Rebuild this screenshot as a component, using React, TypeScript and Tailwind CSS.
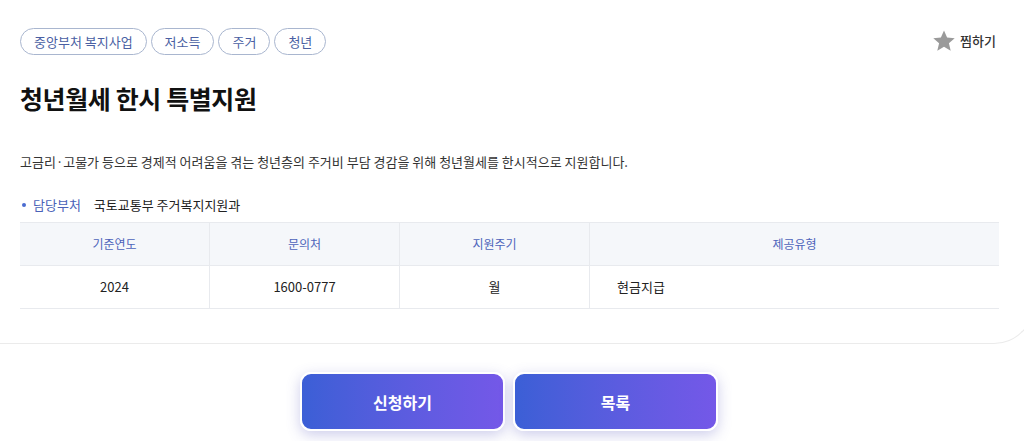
import React from "react";

export default function App() {
  const tags = ["중앙부처 복지사업", "저소득", "주거", "청년"];
  return (
    <div
      className="w-[1024px] h-[441px] overflow-hidden bg-white text-[#222]"
      style={{ fontFamily: '"Noto Sans CJK KR", "Noto Sans", sans-serif' }}
    >
      <div className="w-[1034px] border-b border-r border-[#ebebeb] rounded-br-[40px] pl-5 pr-[35px] pt-7 h-[344px]">
        <div className="flex items-start justify-between">
          <div className="flex gap-1">
            {tags.map((t) => (
              <span
                key={t}
                className="h-[27px] px-[13px] rounded-full border border-[#a9b6cf] text-[13px] leading-[25px] text-[#4a5fa3]"
              >
                {t}
              </span>
            ))}
          </div>
          <div className="flex items-center gap-[4px] mr-[2px] mt-[1px]">
            <svg width="24" height="24" viewBox="0 0 24 24">
              <path
                d="M12 1.5l3.1 7.1 7.6.6-5.8 5 1.8 7.5L12 17.7l-6.7 4 1.8-7.5-5.8-5 7.6-.6z"
                fill="#9a9a9a"
              />
            </svg>
            <span className="text-[13px] text-[#333] font-medium">찜하기</span>
          </div>
        </div>
        <h1 className="mt-[25px] text-[25px] font-bold leading-[36px] text-[#111] tracking-[-0.4px]">
          청년월세 한시 특별지원
        </h1>
        <p className="mt-[36px] text-[13px] leading-[20px] text-[#333]">
          고금리·고물가 등으로 경제적 어려움을 겪는 청년층의 주거비 부담 경감을 위해 청년월세를 한시적으로 지원합니다.
        </p>
        <div className="mt-[23px] flex items-center text-[13px] leading-[20px]">
          <span className="ml-[2px] w-[4px] h-[4px] rounded-full bg-[#4a6bd0]" />
          <span className="ml-[7px] text-[#4a62b8]">담당부처</span>
          <span className="ml-[13px] text-[#222]">국토교통부 주거복지지원과</span>
        </div>
        <div className="mt-[7px] w-[979px] border-t border-[#e8eaee]">
          <div className="grid grid-cols-[190px_190px_190px_1fr] bg-[#f5f7fa] h-[43px] border-b border-[#e8eaee] text-[12px] text-[#4d64bb]">
            <div className="flex items-center justify-center border-r border-[#e8eaee]">기준연도</div>
            <div className="flex items-center justify-center border-r border-[#e8eaee]">문의처</div>
            <div className="flex items-center justify-center border-r border-[#e8eaee]">지원주기</div>
            <div className="flex items-center justify-center">제공유형</div>
          </div>
          <div className="grid grid-cols-[190px_190px_190px_1fr] h-[43px] border-b border-[#e8eaee] text-[13px] text-[#222]">
            <div className="flex items-center justify-center border-r border-[#e8eaee]">2024</div>
            <div className="flex items-center justify-center border-r border-[#e8eaee]">1600-0777</div>
            <div className="flex items-center justify-center border-r border-[#e8eaee]">월</div>
            <div className="flex items-center pl-[27px]">현금지급</div>
          </div>
        </div>
      </div>
      <div className="flex justify-center gap-[8px] pt-[28px] pr-[6px]">
        <button className="w-[205px] h-[59px] rounded-[11px] border-2 border-white bg-gradient-to-r from-[#3b5fd6] to-[#7458e8] text-white text-[16px] font-bold shadow-[0_4px_14px_rgba(90,90,190,0.3)]">
          신청하기
        </button>
        <button className="w-[205px] h-[59px] rounded-[11px] border-2 border-white bg-gradient-to-r from-[#3b5fd6] to-[#7458e8] text-white text-[16px] font-bold shadow-[0_4px_14px_rgba(90,90,190,0.3)]">
          목록
        </button>
      </div>
    </div>
  );
}
